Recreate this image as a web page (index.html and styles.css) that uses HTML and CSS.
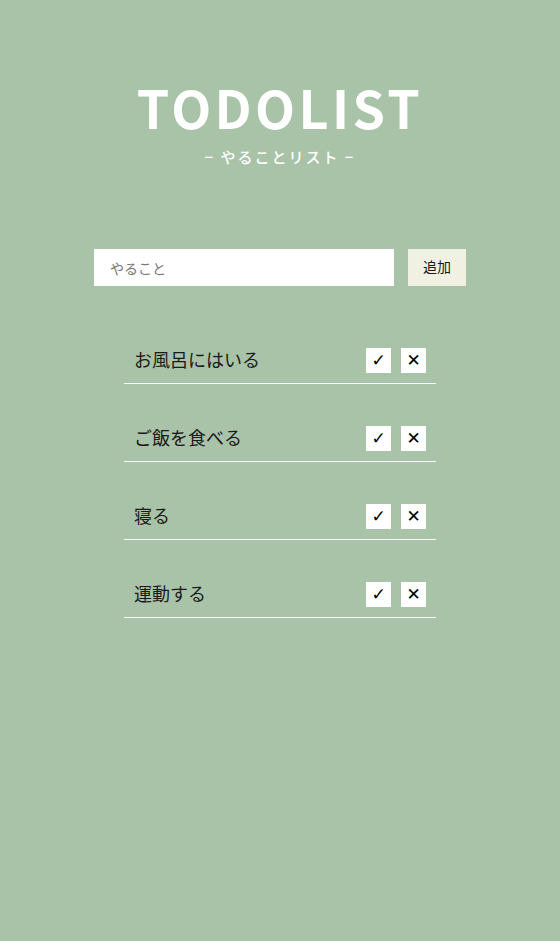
FILE: index.html
```html
<!DOCTYPE html>
<html lang="ja">

<head>
    <meta charset="UTF-8">
    <meta name="viewport" content="width=device-width, initial-scale=1.0">
    <title>TODOLIST</title>
    <link rel="stylesheet" href="styles.css">
</head>

<body>
    <header class="header">
        <h1 class="title">TODOLIST</h1>
        <p class="subtitle">− やることリスト −</p>
    </header>

    <main class="main">
        <form class="add-form">
            <input type="text" class="add-input" placeholder="やること">
            <button type="button" class="add-btn">追加</button>
        </form>

        <ul class="todo-list">
            <li class="todo-item">
                <span class="todo-text">お風呂にはいる</span>
                <div class="todo-actions">
                    <button class="icon-btn">✓</button>
                    <button class="icon-btn">✕</button>
                </div>
            </li>
            <li class="todo-item">
                <span class="todo-text">ご飯を食べる</span>
                <div class="todo-actions">
                    <button class="icon-btn">✓</button>
                    <button class="icon-btn">✕</button>
                </div>
            </li>
            <li class="todo-item">
                <span class="todo-text">寝る</span>
                <div class="todo-actions">
                    <button class="icon-btn">✓</button>
                    <button class="icon-btn">✕</button>
                </div>
            </li>
            <li class="todo-item">
                <span class="todo-text">運動する</span>
                <div class="todo-actions">
                    <button class="icon-btn">✓</button>
                    <button class="icon-btn">✕</button>
                </div>
            </li>
        </ul>
    </main>
</body>

</html>
```

FILE: styles.css
```css
* {
    padding: 0;
    margin: 0;
    box-sizing: border-box;
    font-family: 'Noto Sans CJK JP', 'Noto Sans', sans-serif;
}

body {
    min-height: 100vh;
    background-color: #a8c3a8;
    color: #1a1a1a;
}

.header {
    padding-top: 75px;
    text-align: center;
    color: #ffffff;
}

.title {
    font-size: 52px;
    font-weight: bold;
    letter-spacing: 3.4px;
    line-height: 64px;
}

.subtitle {
    font-size: 15px;
    font-weight: 500;
    letter-spacing: 2px;
    line-height: 22px;
    margin-top: 7px;
}

.main {
    display: flex;
    flex-direction: column;
    align-items: center;
    padding-top: 81px;
}

.add-form {
    display: flex;
    gap: 14px;
}

.add-input {
    width: 300px;
    height: 37px;
    border: none;
    outline: none;
    padding-left: 16px;
    font-size: 14px;
    background-color: #ffffff;
}

.add-input::placeholder {
    color: #777777;
}

.add-btn {
    width: 58px;
    height: 37px;
    border: none;
    background-color: #f0f0e3;
    font-size: 14px;
    line-height: 35px;
    padding-bottom: 2px;
    color: #1a1a1a;
    cursor: pointer;
}

.todo-list {
    list-style: none;
    width: 312px;
    margin-top: 20px;
}

.todo-item {
    display: flex;
    justify-content: space-between;
    align-items: center;
    padding: 10px;
    margin-top: 32px;
    border-bottom: 1px solid #ffffff;
}

.todo-text {
    font-size: 18px;
    line-height: 23px;
    padding-bottom: 2px;
}

.todo-actions {
    display: flex;
    gap: 10px;
}

.icon-btn {
    width: 25px;
    height: 25px;
    border: none;
    background-color: #ffffff;
    font-family: 'DejaVu Sans', sans-serif;
    font-size: 17px;
    font-weight: bold;
    line-height: 25px;
    color: #000000;
    cursor: pointer;
}
```
